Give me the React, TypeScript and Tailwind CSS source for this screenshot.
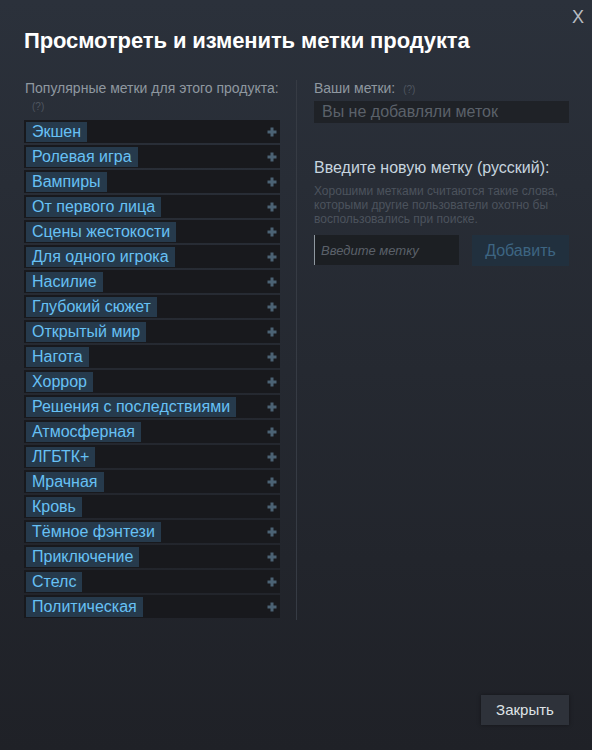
import { useState } from 'react'

const populares = [
  'Экшен',
  'Ролевая игра',
  'Вампиры',
  'От первого лица',
  'Сцены жестокости',
  'Для одного игрока',
  'Насилие',
  'Глубокий сюжет',
  'Открытый мир',
  'Нагота',
  'Хоррор',
  'Решения с последствиями',
  'Атмосферная',
  'ЛГБТК+',
  'Мрачная',
  'Кровь',
  'Тёмное фэнтези',
  'Приключение',
  'Стелс',
  'Политическая',
]

function Mais() {
  return (
    <svg width="10" height="10" viewBox="0 0 10 10" className="shrink-0">
      <path d="M5 0.5v9M0.5 5h9" stroke="#4b6274" strokeWidth="3" />
    </svg>
  )
}

export default function App() {
  const [novaMetka, setNovaMetka] = useState('')

  return (
    <div
      className="relative w-[592px] h-[750px] overflow-hidden bg-gradient-to-b from-[#2b313b] to-[#1f2127] text-[#c6d4df]"
      style={{ fontFamily: '"Liberation Sans", Arial, sans-serif' }}
    >
      <button className="absolute top-[8px] right-[8px] text-[18px] text-[#b7bcc2] leading-none">X</button>

      <div className="px-6 pt-[29px]">
        <h1 className="text-[22px] font-bold text-white leading-6 tracking-[-0.1px]">Просмотреть и изменить метки продукта</h1>

        <div className="flex mt-[27px]">
          <div className="w-[273px] pr-4 border-r border-[#363b44] pb-[2px]">
            <div className="text-[14px] text-[#8f98a0] leading-4 pl-px">Популярные метки для этого продукта:</div>
            <div className="text-[10px] text-[#4f5660] pl-[8px] mt-[5px] leading-3">(?)</div>
            <div className="mt-[7px] flex flex-col gap-[2px]">
              {populares.map(m => (
                <div key={m} className="h-[23px] w-[256px] bg-[#18191d] flex items-center justify-between pl-[2px] pr-[3px]">
                  <span className="h-[20px] px-[6px] bg-[#263a4c] text-[#67c1f5] text-[16px] leading-[20px]">{m}</span>
                  <Mais />
                </div>
              ))}
            </div>
          </div>

          <div className="pl-[17px] flex-1 pr-[22px]">
            <div className="text-[14px] text-[#8f98a0] leading-4">
              Ваши метки: <span className="text-[10px] text-[#4f5660] ml-1">(?)</span>
            </div>
            <div className="mt-[3px] h-[22px] bg-[#1f2227] text-[16px] text-[#5b616a] leading-[22px] pl-[8px]">
              Вы не добавляли меток
            </div>

            <div className="mt-[35px] text-[16px] text-[#c6d4df] leading-5">Введите новую метку (русский):</div>
            <div className="mt-[6px] text-[12px] text-[#4c535d] leading-[14px]">
              Хорошими метками считаются такие слова,<br />
              которыми другие пользователи охотно бы<br />
              воспользовались при поиске.
            </div>
            <div className="flex mt-[9px] gap-[13px]">
              <input
                value={novaMetka}
                onChange={e => setNovaMetka(e.target.value)}
                placeholder="Введите метку"
                className="w-[145px] h-[30px] bg-[#1c1f23] border-l border-[#8f98a0] pl-[6px] text-[13px] italic text-[#c6d4df] placeholder:text-[#5b616a] outline-none"
              />
              <button className="w-[97px] h-[31px] bg-[#21303e] text-[#3d6582] text-[16px]">Добавить</button>
            </div>
          </div>
        </div>
      </div>

      <button className="absolute left-[481px] top-[695px] w-[88px] h-[30px] bg-[#2e323a] text-[#dfe3e6] text-[15px] shadow-[0_0_4px_rgba(0,0,0,0.4)]">
        Закрыть
      </button>
    </div>
  )
}
